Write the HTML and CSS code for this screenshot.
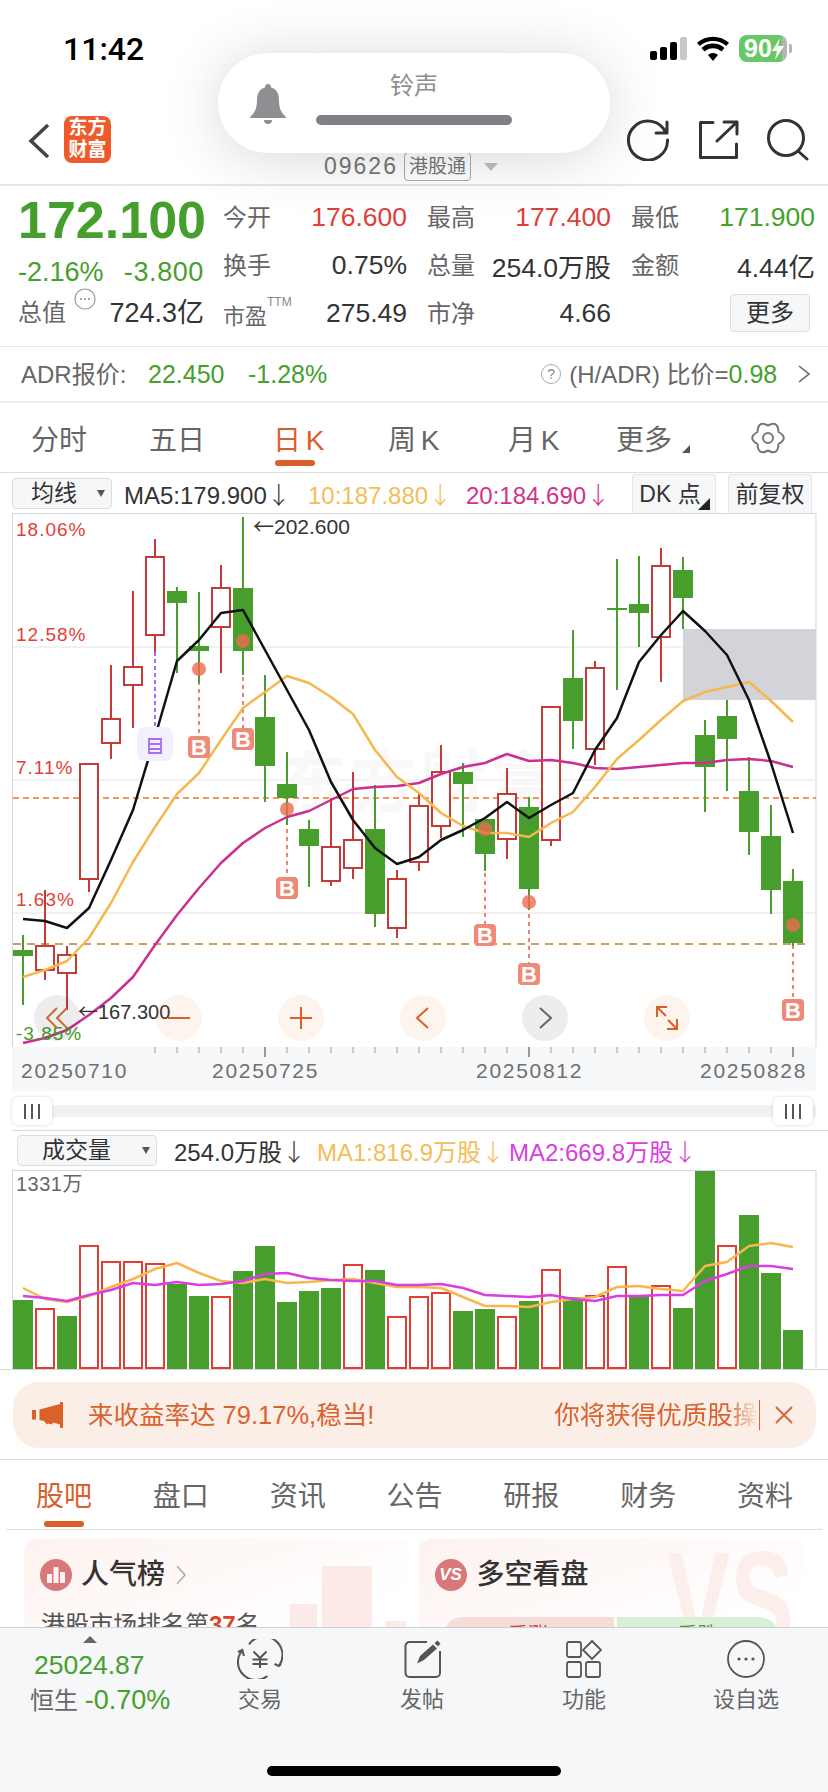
FILE: index.html
```html
<!DOCTYPE html>
<html lang="en">
  <head>
    <meta charset="UTF-8" />
    <title>09626 港股通</title>
    <link rel="stylesheet" href="styles.css">
  </head>
  <body>
    <div class="phone">

      <div class="status-bar">
        <span class="clock">11:42</span>
        <div class="status-icons">
          <div class="signal"><i></i><i></i><i></i><i></i></div>
          <svg class="wifi" width="32" height="25" viewBox="0 0 32 25"><path d="M16 25 11 19a7 7 0 0 1 10 0zM7.500 15.500 4.500 12a17 17 0 0 1 23 0l-3 3.500a12.500 12.500 0 0 0-17 0zM2.800 10 0 6.800a24 24 0 0 1 32 0L29.200 10a20 20 0 0 0-26.400 0z" fill="#000"/></svg>
          <div class="battery"><span>90</span><svg width="12" height="22" viewBox="0 0 12 22"><path d="M8 0 0 13h5l-2 9 9-14H6z" fill="#fff"/></svg></div>
          <i class="battery-nub"></i>
        </div>
      </div>

      <!-- system ringer hud, sits on top of the header -->
      <div class="ringer">
        <svg class="ringer-bell" width="36" height="42" viewBox="0 0 36 42"><path d="M18 0c2 0 3 1.500 3 3.400C27 5 29 10 29 16c0 8 2 12 5 15 1 1 2 2 2 3H0c0-1 1-2 2-3 3-3 5-7 5-15C7 10 9 5 15 3.400 15 1.500 16 0 18 0zM14 36h8a4 4 0 0 1-8 0z" fill="#8e8e93"/></svg>
        <div class="ringer-main">
          <span class="ringer-title">铃声</span>
          <div class="ringer-bar"></div>
        </div>
      </div>

      <div class="header">
        <svg class="back" width="22" height="34" viewBox="0 0 22 34"><path d="M20 1 3 17l17 16" fill="none" stroke="#444" stroke-width="3.500"/></svg>
        <div class="logo">东方<br>财富</div>
        <div class="code-row">
          <span class="code">09626</span>
          <span class="code-tag">港股通</span>
          <i class="code-caret"></i>
        </div>
        <div class="header-actions">
          <svg width="42" height="42" viewBox="0 0 42 42"><path d="M39 14A19.500 19.500 0 1 0 40.500 21M40 3v11H29" fill="none" stroke="#333" stroke-width="3" stroke-linecap="round" stroke-linejoin="round"/></svg>
          <svg width="42" height="42" viewBox="0 0 42 42"><path d="M16 3.500H3.500v35h36V25M20 22 40 3M27 3h13v12" fill="none" stroke="#333" stroke-width="3" stroke-linecap="round" stroke-linejoin="round"/></svg>
          <svg width="42" height="42" viewBox="0 0 42 42"><circle cx="19" cy="19" r="17.500" fill="none" stroke="#333" stroke-width="3"/><path d="M31 32l9 8" stroke="#333" stroke-width="3" stroke-linecap="round"/></svg>
        </div>
      </div>

      <div class="quote">
        <div class="quote-left">
          <div class="price">172.100</div>
          <div class="change"><span>-2.16%</span><span class="change-abs">-3.800</span></div>
          <div class="mktcap">
            <span class="mktcap-label">总值<svg width="22" height="22" viewBox="0 0 22 22"><circle cx="11" cy="11" r="10" fill="none" stroke="#999" stroke-width="1.200"/><circle cx="7" cy="11" r="1" fill="#888"/><circle cx="11" cy="11" r="1" fill="#888"/><circle cx="15" cy="11" r="1" fill="#888"/></svg></span>
            <span class="mktcap-value">724.3亿</span>
          </div>
        </div>
        <div class="stats">
          <div class="stat"><span>今开</span><b class="up">176.600</b></div>
          <div class="stat"><span>最高</span><b class="up">177.400</b></div>
          <div class="stat"><span>最低</span><b class="down">171.900</b></div>
          <div class="stat"><span>换手</span><b>0.75%</b></div>
          <div class="stat"><span>总量</span><b>254.0万股</b></div>
          <div class="stat"><span>金额</span><b>4.44亿</b></div>
          <div class="stat"><span class="pe">市盈<sup>TTM</sup></span><b>275.49</b></div>
          <div class="stat"><span>市净</span><b>4.66</b></div>
          <div class="more-btn">更多</div>
        </div>
      </div>

      <div class="adr-row">
        <span class="adr-label">ADR报价:</span>
        <span class="down adr-price">22.450</span>
        <span class="down adr-pct">-1.28%</span>
        <span class="adr-help">?</span>
        <span class="adr-ratio">(H/ADR) 比价=<em class="down">0.98</em></span>
        <svg class="adr-arrow" width="12" height="18" viewBox="0 0 12 18"><path d="M1 1l10 8-10 8" fill="none" stroke="#666" stroke-width="1.600"/></svg>
      </div>

      <div class="period-tabs">
        <span>分时</span>
        <span>五日</span>
        <span class="active">日 K</span>
        <span>周 K</span>
        <span>月 K</span>
        <span class="has-corner">更多</span>
        <svg width="34" height="34" viewBox="0 0 34 34"><path d="M27.500 11Q38 17 27.500 23Q27 35 17 29.500Q7 35 6.500 23Q-4 17 6.500 11Q7 -1 17 4.500Q27 -1 27.500 11z" fill="none" stroke="#777" stroke-width="2" stroke-linejoin="round"/><circle cx="17" cy="17" r="5" fill="none" stroke="#777" stroke-width="2"/></svg>
      </div>

      <div class="chart-head">
        <div class="select select-ma">均线<i></i></div>
        <span class="ma ma5">MA5:179.900<u>↓</u></span>
        <span class="ma ma10">10:187.880<u>↓</u></span>
        <span class="ma ma20">20:184.690<u>↓</u></span>
        <div class="chip chip-dk">DK 点<i></i></div>
        <div class="chip">前复权</div>
      </div>

      <div class="kline" id="kline">
        <div class="fab fab-grey fab-1"><svg width="24" height="24" viewBox="0 0 24 24"><path d="M12 2 2 12l10 10M22 2 12 12l10 10" fill="none" stroke="#cf6a33" stroke-width="2"/></svg></div>
        <div class="fab fab-2"><svg width="24" height="24" viewBox="0 0 24 24"><path d="M1 12h22" stroke="#d9602a" stroke-width="2"/></svg></div>
        <div class="fab fab-3"><svg width="24" height="24" viewBox="0 0 24 24"><path d="M1 12h22M12 1v22" stroke="#d9602a" stroke-width="2"/></svg></div>
        <div class="fab fab-4"><svg width="24" height="24" viewBox="0 0 24 24"><path d="M17 2 6 12l11 10" fill="none" stroke="#d9602a" stroke-width="2"/></svg></div>
        <div class="fab fab-grey fab-5"><svg width="24" height="24" viewBox="0 0 24 24"><path d="M7 2l11 10L7 22" fill="none" stroke="#666" stroke-width="2"/></svg></div>
        <div class="fab fab-6"><svg width="24" height="24" viewBox="0 0 24 24"><path d="M2 11V1h10M2 1l9 9M22 13v10H12M22 23l-9-9" fill="none" stroke="#d9602a" stroke-width="2"/></svg></div>
      </div>

      <div class="date-axis" id="dateAxis">
        <span class="date-1">20250710</span>
        <span class="date-2">20250725</span>
        <span class="date-3">20250812</span>
        <span class="date-4">20250828</span>
      </div>

      <div class="slider">
        <div class="slider-track"></div>
        <div class="grip"><i></i><i></i><i></i></div>
        <div class="grip"><i></i><i></i><i></i></div>
      </div>

      <div class="vol-head">
        <div class="select select-vol">成交量<i></i></div>
        <span class="vol-now">254.0万股<u>↓</u></span>
        <span class="vol-ma1">MA1:816.9万股<u>↓</u></span>
        <span class="vol-ma2">MA2:669.8万股<u>↓</u></span>
      </div>

      <div class="volume" id="volume"></div>

      <div class="banner">
        <svg width="31" height="26" viewBox="0 0 31 26"><path d="M0 8h4v9.500H0zM7.500 7.500 28 2v20.500l-7-2-1.500 2-3-1-1.500 1-3-3.500-4.500-1zM28 0h3v26h-3z" fill="#da6128"/></svg>
        <div class="ticker">
          <span>来收益率达 79.17%,稳当!</span>
          <span class="ticker-next">你将获得优质股操</span>
        </div>
        <svg class="banner-close" width="18" height="18" viewBox="0 0 18 18"><path d="M1 1l16 16M17 1 1 17" stroke="#d9632f" stroke-width="1.800"/></svg>
      </div>

      <div class="info-tabs">
        <span class="active">股吧</span>
        <span>盘口</span>
        <span>资讯</span>
        <span>公告</span>
        <span>研报</span>
        <span>财务</span>
        <span>资料</span>
      </div>

      <div class="cards">
        <div class="card">
          <div class="card-deco"><i></i><i></i><i></i></div>
          <div class="card-title">
            <svg width="32" height="32" viewBox="0 0 32 32"><circle cx="16" cy="16" r="16" fill="#d9787a"/><path d="M7 24v-9h5v9zM13.500 24V8h5v16zM20 24V13h5v11z" fill="#fff" opacity=".9"/></svg>
            人气榜
            <svg class="card-chevron" width="10" height="20" viewBox="0 0 10 20"><path d="M1 1l8 9-8 9" fill="none" stroke="#aaa" stroke-width="1.500"/></svg>
          </div>
          <div class="card-sub">港股市场排名第<b>37</b>名</div>
        </div>
        <div class="card">
          <div class="card-vs">VS</div>
          <div class="card-title">
            <span class="vs-badge">VS</span>
            多空看盘
          </div>
          <div class="vote">
            <span class="vote-up">看涨</span>
            <span class="vote-down">看跌</span>
          </div>
        </div>
      </div>

      <div class="footer">
        <div class="index">
          <i class="index-caret"></i>
          <div class="index-value">25024.87</div>
          <div class="index-name">恒生 <span class="down">-0.70%</span></div>
        </div>
        <div class="footer-item footer-trade">
          <svg width="46" height="40" viewBox="-2 0 46 40"><path d="M10 5.300A18 18 0 0 1 40 27M28.300 37A18 18 0 0 1 3.300 11.300M-1 13 3.300 11 5 17M35.500 25 40 27l2-2" fill="none" stroke="#555" stroke-width="2"/><path d="M14.500 12.500 21 19l6.500-6.500M13.500 20.500h15M13.500 25h15M21 19v10" fill="none" stroke="#555" stroke-width="2"/></svg>
          <span>交易</span>
        </div>
        <div class="footer-item footer-post">
          <svg width="38" height="40" viewBox="0 0 38 40"><path d="M24 3H6.500a4 4 0 0 0-4 4v27a4 4 0 0 0 4 4H33a4 4 0 0 0 4-4V12" fill="none" stroke="#555" stroke-width="2"/><path d="M14 24.500 17 17 30 5.500l4 4L21 21zM31.500 4l3-2.500 3 3-2.500 3z" fill="#555"/></svg>
          <span>发帖</span>
        </div>
        <div class="footer-item footer-func">
          <svg width="36" height="38" viewBox="0 0 36 38"><rect x="1" y="2" width="14" height="15" rx="2" fill="none" stroke="#555" stroke-width="1.800"/><path d="M26 1l9 9-9 9-9-9z" fill="none" stroke="#555" stroke-width="1.800"/><rect x="1" y="22" width="14" height="15" rx="2" fill="none" stroke="#555" stroke-width="1.800"/><rect x="20" y="22" width="14" height="15" rx="2" fill="none" stroke="#555" stroke-width="1.800"/></svg>
          <span>功能</span>
        </div>
        <div class="footer-item footer-watch">
          <svg width="38" height="38" viewBox="0 0 38 38"><circle cx="19" cy="19" r="18" fill="none" stroke="#555" stroke-width="1.800"/><circle cx="12" cy="19" r="1.600" fill="#555"/><circle cx="19" cy="19" r="1.600" fill="#555"/><circle cx="26" cy="19" r="1.600" fill="#555"/></svg>
          <span>设自选</span>
        </div>
        <div class="home-bar"></div>
      </div>

    </div>

    <script src="chart.js"></script>
  </body>
</html>
```

FILE: styles.css
```css
* {
  box-sizing: border-box;
}

body {
  margin: 0;
  padding: 0;
  background-color: #fff;
  font-family: "Liberation Sans", "Noto Sans CJK SC", sans-serif;
  color: #333;
}

i, u, em {
  font-style: normal;
  text-decoration: none;
}

.phone {
  position: relative;
  width: 828px;
  height: 1792px;
  overflow: hidden;
}

.up { color: #df3f3a; }
.down { color: #46a02c; }

/* status bar */
.status-bar {
  height: 100px;
  padding: 32px 36px 0 63px;
  display: flex;
  justify-content: space-between;
  align-items: flex-start;
}

.clock {
  font-family: Roboto, "Liberation Sans", sans-serif;
  font-size: 32px;
  font-weight: 500;
  line-height: 34px;
  color: #000;
}

.status-icons {
  display: flex;
  align-items: center;
  gap: 10px;
  height: 27px;
  margin-top: 3px;
}

.signal {
  display: flex;
  align-items: flex-end;
  gap: 3px;
  height: 23px;
}

.signal i {
  width: 7px;
  border-radius: 2px;
  background: #000;
}

.signal i:nth-child(1) { height: 9px; }
.signal i:nth-child(2) { height: 13px; }
.signal i:nth-child(3) { height: 18px; }
.signal i:nth-child(4) { height: 23px; background: #c8c8c8; }

.battery {
  width: 48px;
  height: 27px;
  border-radius: 8px;
  background: linear-gradient(90deg, #67c868 90%, #b5b5b5 90%);
  color: #fff;
  font-size: 25px;
  font-weight: bold;
  display: flex;
  align-items: center;
  padding-left: 5px;
}

.battery-nub {
  width: 3px;
  height: 9px;
  margin-left: -8px;
  border-radius: 0 2px 2px 0;
  background: #b5b5b5;
}

/* ringer hud */
.ringer {
  position: absolute;
  left: 218px;
  top: 53px;
  width: 392px;
  height: 100px;
  border-radius: 50px;
  background: #fff;
  box-shadow: 0 4px 60px rgba(0, 0, 0, 0.16);
  display: flex;
  align-items: center;
  z-index: 5;
}

.ringer-bell {
  margin-left: 32px;
  margin-top: 3px;
}

.ringer-main {
  margin-left: 30px;
  margin-top: -12px;
  width: 196px;
  display: flex;
  flex-direction: column;
  align-items: center;
}

.ringer-title {
  font-size: 24px;
  line-height: 34px;
  color: #8e8e93;
  margin-bottom: 12px;
}

.ringer-bar {
  width: 196px;
  height: 10px;
  border-radius: 5px;
  background: #7f7f84;
}

/* header */
.header {
  position: relative;
  height: 86px;
  display: flex;
  align-items: flex-start;
  background: #fff;
  border-bottom: 2px solid #e6e6e6;
  padding: 16px 0 0 28px;
}

.back {
  margin-top: 8px;
}

.logo {
  width: 47px;
  height: 47px;
  margin-left: 14px;
  border-radius: 8px;
  background: #f0592a;
  color: #fff;
  font-size: 19px;
  font-weight: bold;
  line-height: 22px;
  text-align: center;
  padding-top: 1px;
}

.code-row {
  position: absolute;
  left: 324px;
  top: 52px;
  display: flex;
  align-items: center;
}

.code {
  font-size: 23px;
  letter-spacing: 2px;
  color: #777;
}

.code-tag {
  margin-left: 6px;
  padding: 0 4px;
  height: 29px;
  line-height: 27px;
  border: 1px solid #aaa;
  border-radius: 4px;
  font-size: 19px;
  color: #777;
}

.code-caret {
  margin-left: 13px;
  border: 7px solid transparent;
  border-top: 8px solid #c2c2c2;
  border-bottom: 0;
}

.header-actions {
  margin-left: auto;
  margin-right: 19px;
  display: flex;
  gap: 28px;
  margin-top: 3px;
}

/* quote block */
.quote {
  height: 161px;
  display: flex;
  padding: 7px 13px 0 18px;
  border-bottom: 1px solid #e8e8e8;
}

.quote-left {
  width: 186px;
  margin-right: 19px;
  display: flex;
  flex-direction: column;
}

.price {
  font-size: 52px;
  font-weight: bold;
  line-height: 54px;
  color: #459f2d;
}

.change {
  display: flex;
  justify-content: space-between;
  margin-top: 10px;
  font-size: 27px;
  line-height: 30px;
  color: #46a02c;
}

.change-abs {
  letter-spacing: 0.6px;
}

.mktcap {
  display: flex;
  justify-content: space-between;
  align-items: center;
  margin-top: 9px;
  font-size: 24px;
  line-height: 34px;
  color: #333;
}

.mktcap-value {
  font-size: 27px;
}

.mktcap-label {
  display: flex;
  color: #666;
}

.mktcap-label svg {
  margin-top: -8px;
  margin-left: 8px;
}

.stats {
  flex: 1;
  display: grid;
  grid-template-columns: 184px 184px 184px;
  column-gap: 20px;
  grid-auto-rows: 48px;
  align-items: center;
}

.stat {
  display: flex;
  justify-content: space-between;
  align-items: center;
  font-size: 24px;
  color: #666;
}

.stat span {
  margin-top: -3px;
}

.stat b {
  font-weight: normal;
  font-size: 26.500px;
}

.stat b:not(.up):not(.down) {
  color: #333;
}

.pe {
  font-size: 22px;
  padding-top: 4px;
  display: flex;
  align-items: flex-start;
}

.pe sup {
  font-size: 12px;
  color: #888;
  margin-top: -4px;
  line-height: 16px;
}

.more-btn {
  justify-self: end;
  margin-right: 5px;
  width: 80px;
  height: 38px;
  line-height: 36px;
  text-align: center;
  background: #f6f7f9;
  border: 1px solid #dcdee3;
  border-radius: 4px;
  font-size: 24px;
  color: #333;
}

/* adr row */
.adr-row {
  height: 56px;
  display: flex;
  align-items: center;
  padding-left: 21px;
  border-bottom: 2px solid #efefef;
  font-size: 24px;
}

.adr-label {
  width: 127px;
  margin-top: -3px;
  white-space: nowrap;
  color: #666;
}

.adr-price {
  font-size: 25px;
  width: 100px;
}

.adr-pct {
  font-size: 25px;
}

.adr-help {
  margin-left: 214px;
  width: 20px;
  height: 20px;
  line-height: 18px;
  border: 1px solid #aaa;
  border-radius: 50%;
  font-size: 14px;
  text-align: center;
  color: #888;
}

.adr-ratio {
  margin-left: 8px;
  margin-top: -3px;
  color: #666;
}

.adr-ratio em {
  font-size: 25px;
}

.adr-arrow {
  margin-left: 21px;
}

/* period tabs */
.period-tabs {
  position: relative;
  height: 70px;
  display: flex;
  align-items: center;
  padding: 0 43px 0 31px;
  border-bottom: 1px solid #dcdcdc;
  font-size: 28px;
  word-spacing: -3px;
  color: #666;
}

.period-tabs span {
  white-space: nowrap;
}

.period-tabs span:nth-child(1) { width: 118px; }
.period-tabs span:nth-child(2) { width: 124px; }
.period-tabs span:nth-child(3) { width: 115px; }
.period-tabs span:nth-child(4) { width: 120px; }
.period-tabs span:nth-child(5) { width: 108px; }
.period-tabs span:nth-child(6) { width: 135px; }

.period-tabs .active {
  position: relative;
  color: #d9602a;
}

.period-tabs .active::after {
  content: "";
  position: absolute;
  left: 2px;
  top: 42px;
  width: 40px;
  height: 6px;
  border-radius: 3px;
  background: #d9602a;
}

.period-tabs .has-corner {
  position: relative;
}

.period-tabs .has-corner::after {
  content: "";
  position: absolute;
  left: 66px;
  top: 27px;
  border-left: 8px solid transparent;
  border-bottom: 8px solid #555;
}

/* chart headers */
.chart-head {
  height: 40px;
  display: flex;
  align-items: center;
  padding-left: 12px;
}

.select {
  position: relative;
  height: 31px;
  border: 1px solid #dcdde2;
  border-radius: 4px;
  background: #f6f7f9;
  font-size: 23px;
  line-height: 28px;
}

.select i {
  position: absolute;
  top: 11px;
  border: 4.500px solid transparent;
  border-top: 7px solid #555;
  border-bottom: 0;
}

.select-ma {
  width: 100px;
  padding-left: 18px;
}

.select-ma i {
  left: 84px;
}

.ma {
  font-size: 24px;
  white-space: nowrap;
}

/* the cjk arrow is the long thin one */
.ma u,
.vol-head u {
  font-family: "Noto Sans CJK SC", sans-serif;
  font-weight: 300;
}

.ma5 { margin-left: 12px; color: #333; width: 184px; }
.ma10 { color: #f5bc58; width: 158px; }
.ma20 { color: #d0328c; width: 166px; }

.chip {
  position: relative;
  width: 84px;
  height: 39px;
  line-height: 38px;
  text-align: center;
  background: #f6f7f9;
  border: 1px solid #e4e5e9;
  border-bottom: 0;
  border-radius: 4px 4px 0 0;
  font-size: 23px;
}

.chip-dk {
  margin-right: 12px;
  padding-right: 8px;
}

.chip-dk i {
  position: absolute;
  right: 5px;
  bottom: 3px;
  border-left: 12px solid transparent;
  border-bottom: 12px solid #222;
}

.kline {
  position: relative;
  height: 534px;
}

.kline svg.plot {
  display: block;
}

.fab {
  position: absolute;
  top: 482px;
  width: 46px;
  height: 46px;
  border-radius: 50%;
  background: rgba(226, 110, 40, 0.08);
  display: flex;
  align-items: center;
  justify-content: center;
}

.fab-grey { background: rgba(0, 0, 0, 0.07); }
.fab-1 { left: 34px; }
.fab-2 { left: 156px; }
.fab-3 { left: 278px; }
.fab-4 { left: 400px; }
.fab-5 { left: 522px; }
.fab-6 { left: 644px; }

.date-axis {
  position: relative;
  height: 44px;
  margin: 0 12px;
  width: 804px;
  background: #f6f7f9;
  font-size: 21px;
  letter-spacing: 1.700px;
  color: #6f6f6f;
}

.date-axis span {
  position: absolute;
  top: 12px;
  line-height: 24px;
}

.date-1 { left: 9px; }
.date-2 { left: 200px; }
.date-3 { left: 464px; }
.date-4 { left: 688px; }

.date-axis svg {
  position: absolute;
  left: 0;
  top: 0;
}

.slider {
  position: relative;
  height: 40px;
  margin-left: 12px;
  border-bottom: 1px solid #d8d8d8;
}

.slider-track {
  position: absolute;
  left: 0;
  top: 14px;
  width: 804px;
  height: 12px;
  background: #f0f1f3;
}

.grip {
  position: absolute;
  top: 6px;
  width: 40px;
  height: 28px;
  border-radius: 6px;
  background: #fff;
  box-shadow: 0 0 3px rgba(0, 0, 0, 0.18);
  display: flex;
  justify-content: center;
  align-items: center;
  gap: 5px;
}

.grip:nth-child(2) { left: 0; }
.grip:nth-child(3) { left: 761px; }

.grip i {
  width: 2px;
  height: 15px;
  background: #555;
}

.vol-head {
  height: 39px;
  display: flex;
  align-items: center;
  padding-left: 17px;
  font-size: 24px;
  white-space: nowrap;
}

.select-vol {
  width: 140px;
  height: 31px;
  padding-left: 24px;
}

.select-vol i {
  left: 124px;
}

.vol-now { margin-left: 17px; width: 143px; color: #333; }
.vol-ma1 { color: #f5bc58; width: 192px; }
.vol-ma2 { color: #d83ee0; }

.volume {
  height: 200px;
}

.volume svg {
  display: block;
}

/* banner */
.banner {
  margin: 12px 12px 0 13px;
  height: 66px;
  border-radius: 26px;
  background: #fbeee7;
  display: flex;
  align-items: center;
  padding-left: 19px;
}

.ticker {
  width: 672px;
  height: 30px;
  margin-left: 25px;
  overflow: hidden;
  display: flex;
  white-space: nowrap;
  border-right: 1px solid #d9632f;
  font-size: 25.500px;
  line-height: 30px;
  color: #d9632f;
}

.ticker-next {
  margin-left: 180px;
  flex-shrink: 0;
  -webkit-mask-image: linear-gradient(90deg, #000 175px, transparent 204px);
  mask-image: linear-gradient(90deg, #000 175px, transparent 204px);
}

.banner-close {
  margin-left: 15px;
}

/* info tabs */
.info-tabs {
  margin-top: 11px;
  height: 71px;
  display: flex;
  justify-content: space-between;
  align-items: center;
  padding: 0 35px 3px 36px;
  border-top: 1px solid #dcdcdc;
  font-size: 28px;
  color: #666;
  position: relative;
}

.info-tabs::after {
  content: "";
  position: absolute;
  left: 6px;
  right: 6px;
  bottom: 0;
  border-bottom: 1px solid #dcdcdc;
}

.info-tabs .active {
  position: relative;
  color: #d9602a;
}

.info-tabs .active::after {
  content: "";
  position: absolute;
  left: 8px;
  top: 47px;
  width: 40px;
  height: 6px;
  border-radius: 3px;
  background: #d9602a;
}

/* cards, cut off by the footer */
.cards {
  height: 98px;
  margin-top: 9px;
  padding: 0 24px;
  display: flex;
  gap: 9px;
  overflow: hidden;
}

.card {
  position: relative;
  flex: 1;
  height: 140px;
  border-radius: 12px;
  background: linear-gradient(160deg, #fdf2ef, #fff 70%);
  overflow: hidden;
}

.card-title {
  position: relative;
  display: flex;
  align-items: center;
  gap: 9px;
  padding: 20px 0 0 16px;
  font-size: 28px;
  font-weight: 500;
  line-height: 32px;
  color: #333;
}

.card-chevron {
  margin-left: 2px;
}

.vs-badge {
  width: 32px;
  height: 32px;
  border-radius: 50%;
  margin-right: 1px;
  background: #d9787a;
  color: #fff;
  font-size: 17px;
  font-weight: bold;
  font-style: italic;
  line-height: 32px;
  text-align: center;
}

.card-sub {
  position: relative;
  padding: 14px 0 0 17px;
  font-size: 24px;
  color: #555;
}

.card-sub b {
  color: #d9432a;
}

.card-deco {
  position: absolute;
  right: 4px;
  top: 27px;
  display: flex;
  align-items: flex-end;
  height: 113px;
}

.card-deco i {
  background: #fbeae7;
}

.card-deco i:nth-child(1) { width: 27px; height: 75px; margin-right: 5px; }
.card-deco i:nth-child(2) { width: 50px; height: 113px; margin-right: 13px; }
.card-deco i:nth-child(3) { width: 21px; height: 58px; }

.card-vs {
  position: absolute;
  right: 10px;
  top: -8px;
  font-size: 140px;
  font-weight: bold;
  line-height: 140px;
  color: #fbeeeb;
  transform: scaleX(0.68);
  transform-origin: right top;
}

.vote {
  position: relative;
  display: flex;
  gap: 3px;
  margin: 26px 24px 0;
  height: 40px;
  font-size: 20px;
  line-height: 36px;
  text-align: center;
}

.vote-up {
  width: 171px;
  border-radius: 20px 0 0 0;
  background: #f6dcd8;
  color: #d9432a;
}

.vote-down {
  width: 162px;
  border-radius: 0 20px 0 0;
  background: #d9efd8;
  color: #46a02c;
}

/* footer */
.footer {
  position: absolute;
  left: 0;
  top: 1627px;
  width: 828px;
  height: 165px;
  background: #f6f7f9;
  border-top: 1px solid #cfd0d6;
}

.index {
  position: absolute;
  left: 30px;
  top: 0;
  width: 150px;
}

.index-caret {
  position: absolute;
  left: 53px;
  top: 8px;
  border: 7px solid transparent;
  border-bottom: 7px solid #666;
  border-top: 0;
}

.index-value {
  position: absolute;
  left: 4px;
  top: 22px;
  font-size: 26.500px;
  line-height: 30px;
  color: #46a02c;
}

.index-name {
  position: absolute;
  top: 55px;
  white-space: nowrap;
  font-size: 24px;
  line-height: 34px;
  color: #666;
}

.index-name span {
  font-size: 27px;
}

.footer-item {
  position: absolute;
  top: 11px;
  width: 100px;
  display: flex;
  flex-direction: column;
  align-items: center;
  font-size: 22px;
  line-height: 30px;
  color: #666;
}

.footer-item svg {
  height: 40px;
  margin-bottom: 6px;
}

.footer-trade { left: 210px; }
.footer-post { left: 372px; }
.footer-func { left: 534px; }
.footer-watch { left: 696px; }

.home-bar {
  position: absolute;
  left: 267px;
  top: 138px;
  width: 294px;
  height: 10px;
  border-radius: 5px;
  background: #000;
}
```

FILE: chart.js
```js
// candle and volume data are in page pixels, same y as the screenshot
const RED = "#c23b38";
const GREEN = "#479e2c";
const CJK = "font-family=\"Noto Sans CJK SC\"";
const xAt = (i) => 23 + 22 * i;

// [wickTop, bodyTop, bodyBottom, wickBottom, isUp]
const candles = [
  [935, 950, 956, 1005, 0], [890, 946, 970, 980, 1], [946, 955, 973, 1010, 1],
  [764, 764, 879, 892, 1], [665, 719, 743, 759, 1], [591, 667, 685, 728, 1],
  [539, 557, 635, 652, 1], [587, 591, 603, 673, 0], [592, 646, 651, 683, 0],
  [565, 588, 627, 673, 1], [517, 588, 651, 675, 0], [675, 717, 766, 802, 0],
  [752, 784, 798, 825, 0], [820, 829, 846, 887, 0], [798, 847, 881, 886, 1],
  [772, 840, 868, 879, 1], [785, 829, 914, 927, 0], [870, 879, 928, 938, 1],
  [792, 806, 862, 871, 1], [745, 772, 826, 838, 1], [763, 772, 784, 837, 0],
  [819, 819, 854, 871, 0], [768, 794, 839, 859, 1], [797, 807, 889, 910, 0],
  [707, 707, 840, 846, 1], [630, 678, 721, 749, 0], [661, 668, 749, 765, 1],
  [559, 608, 610, 690, 0], [556, 604, 613, 647, 0], [548, 566, 637, 682, 1],
  [557, 570, 598, 629, 0], [720, 735, 767, 812, 0], [700, 716, 739, 791, 0],
  [757, 791, 832, 855, 0], [805, 836, 890, 914, 0], [869, 881, 943, 946, 0],
];

const ma5 = [919, 921, 928, 908, 860, 810, 737, 661, 640, 613, 610, 650, 690, 730, 782, 820, 848, 864, 857, 840, 830, 818, 802, 818, 805, 793, 750, 718, 662, 635, 611, 631, 655, 700, 763, 833];
const ma10 = [977, 970, 961, 938, 903, 862, 827, 794, 773, 740, 708, 692, 676, 683, 697, 714, 750, 777, 793, 813, 826, 833, 833, 837, 823, 812, 787, 759, 740, 720, 701, 692, 687, 682, 701, 722];
const ma20 = [1043, 1038, 1030, 1015, 998, 977, 945, 915, 888, 863, 843, 828, 817, 811, 800, 789, 787, 786, 783, 774, 767, 763, 754, 761, 760, 763, 768, 769, 767, 765, 763, 763, 760, 759, 761, 767];

// [barTop, isUp]
const volumes = [
  [1300, 0], [1309, 1], [1316, 0], [1246, 1], [1262, 1], [1262, 1], [1264, 1], [1284, 0], [1296, 0],
  [1297, 1], [1271, 0], [1246, 0], [1302, 0], [1291, 0], [1288, 0], [1265, 1], [1270, 0], [1317, 1],
  [1297, 1], [1293, 1], [1311, 0], [1309, 0], [1317, 1], [1301, 0], [1270, 1], [1297, 0], [1296, 1],
  [1267, 1], [1296, 0], [1286, 1], [1308, 0], [1171, 0], [1246, 1], [1215, 0], [1273, 0], [1330, 0],
];
const volMa1 = [1288, 1299, 1302, 1296, 1287, 1279, 1269, 1263, 1273, 1281, 1283, 1279, 1283, 1282, 1280, 1279, 1283, 1287, 1287, 1288, 1297, 1306, 1306, 1307, 1302, 1299, 1297, 1287, 1286, 1289, 1291, 1266, 1262, 1246, 1243, 1247];
const volMa2 = [1296, 1298, 1301, 1295, 1290, 1283, 1285, 1282, 1285, 1284, 1281, 1274, 1273, 1278, 1280, 1281, 1281, 1285, 1285, 1284, 1288, 1295, 1296, 1297, 1295, 1299, 1301, 1296, 1296, 1295, 1295, 1281, 1274, 1266, 1266, 1269];

// buy signals: candle index, dot y, badge y
const signals = [[8, 669, 747], [10, 641, 739], [12, 809, 888], [21, 829, 935], [23, 902, 974], [35, 925, 1010]];

const pctLabels = [
  ["18.06%", 536, "#df3f3a"], ["12.58%", 641, "#df3f3a"], ["7.11%", 774, "#df3f3a"],
  ["1.63%", 906, "#df3f3a"], ["-3.85%", 1040, "#46a02c"],
];

function polyline(values, color, width) {
  const pts = values.map((y, i) => xAt(i) + "," + y).join(" ");
  return `<polyline points="${pts}" fill="none" stroke="${color}" stroke-width="${width}" stroke-linejoin="round"/>`;
}

function line(x1, y1, x2, y2, color, width, dash) {
  const d = dash ? ` stroke-dasharray="${dash}"` : "";
  return `<line x1="${x1}" y1="${y1}" x2="${x2}" y2="${y2}" stroke="${color}" stroke-width="${width}"${d}/>`;
}

function drawKline() {
  let s = "";

  // frame and grid
  s += line(816, 513, 816, 1047, "#d5d5da", 1);
  s += line(12.5, 513, 12.5, 1047, "#d5d5da", 1);
  s += line(12, 513.500, 816, 513.500, "#d5d5da", 1);
  [647, 780, 913].forEach((y) => { s += line(13, y, 816, y, "#ecedf1", 1.500); });

  s += `<text x="280" y="806" font-size="66" font-weight="bold" letter-spacing="4" fill="#f8f8f8">东方财富</text>`;
  s += `<rect x="683" y="629" width="133" height="71" fill="#d3d4da"/>`;

  s += line(13, 798, 816, 798, "#f0965a", 2, "6 4");
  s += line(13, 944, 810, 944, "#cf9c65", 2, "8 6");

  // dashed drops below signals
  s += line(155, 652, 155, 734, "#a66cff", 2, "4 3");
  signals.forEach(([i, dot, badge]) => {
    s += line(xAt(i), dot + 12, xAt(i), badge - 10, "#ee8273", 2, "4 4");
  });

  candles.forEach(([wt, bt, bb, wb, up], i) => {
    const x = xAt(i);
    const color = up ? RED : GREEN;
    s += line(x, wt, x, wb, color, 2);
    if (up) {
      s += `<rect x="${x - 9}" y="${bt}" width="18" height="${bb - bt}" fill="#fff" stroke="${color}" stroke-width="2"/>`;
    } else {
      s += `<rect x="${x - 10}" y="${bt}" width="20" height="${bb - bt}" fill="${color}"/>`;
    }
  });

  s += polyline(ma20, "#cb2f8f", 2.5);
  s += polyline(ma10, "#f6b84e", 2.5);
  s += polyline(ma5, "#111", 2.5);

  signals.forEach(([i, dot, badge]) => {
    const x = xAt(i);
    s += `<circle cx="${x}" cy="${dot}" r="7" fill="#ec6a50" opacity=".8"/>`;
    s += `<rect x="${x - 11}" y="${badge - 11}" width="22" height="22" rx="4" fill="#f08a78"/>`;
    s += `<text x="${x}" y="${badge + 8}" font-size="22" font-weight="bold" text-anchor="middle" fill="#fff">B</text>`;
  });

  // purple note marker
  s += `<rect x="137" y="727" width="36" height="34" rx="8" fill="#f3effd"/>`;
  s += `<path d="M149 739h12v14h-12zM149 744h12M149 749h12" fill="none" stroke="#a66cff" stroke-width="1.800"/>`;

  pctLabels.forEach(([t, y, color]) => {
    s += `<text x="16" y="${y}" font-size="19" letter-spacing="1" fill="${color}">${t}</text>`;
  });

  s += `<text x="253" y="534" font-size="21" fill="#333"><tspan ${CJK}>←</tspan>202.600</text>`;
  s += `<text x="78" y="1019" font-size="20" fill="#333"><tspan ${CJK}>←</tspan>167.300</text>`;

  const box = document.getElementById("kline");
  box.insertAdjacentHTML("afterbegin",
    `<svg class="plot" width="828" height="534" viewBox="0 513 828 534" font-family="'Liberation Sans','Noto Sans CJK SC',sans-serif">${s}</svg>`);
}

function drawTicks() {
  let s = "";
  for (let i = 6; i < candles.length; i++) {
    const major = i === 11 || i === 23 || i === 35;
    s += line(xAt(i) - 12, 0, xAt(i) - 12, major ? 10 : 6, major ? "#999" : "#bbb", major ? 2 : 1.500);
  }
  document.getElementById("dateAxis").insertAdjacentHTML("afterbegin",
    `<svg width="804" height="12">${s}</svg>`);
}

function drawVolume() {
  let s = "";
  s += `<path d="M12.500 1370V1170.500H816V1369" fill="none" stroke="#d5d5da" stroke-width="1"/>`;
  s += line(0, 1369.500, 828, 1369.500, "#d5d5da", 1);
  s += `<text x="16" y="1191" font-size="20" letter-spacing=".5" fill="#666">1331万</text>`;

  volumes.forEach(([top, up], i) => {
    const x = xAt(i);
    if (up) {
      s += `<rect x="${x - 9}" y="${top}" width="18" height="${1368 - top}" fill="#fff" stroke="#e23c35" stroke-width="2"/>`;
    } else {
      s += `<rect x="${x - 10}" y="${top}" width="20" height="${1369 - top}" fill="${GREEN}"/>`;
    }
  });

  s += polyline(volMa1, "#f6b84e", 2.5);
  s += polyline(volMa2, "#d83ee0", 2.5);

  document.getElementById("volume").innerHTML =
    `<svg width="828" height="200" viewBox="0 1170 828 200" font-family="'Liberation Sans','Noto Sans CJK SC',sans-serif">${s}</svg>`;
}

drawKline();
drawTicks();
drawVolume();
```
